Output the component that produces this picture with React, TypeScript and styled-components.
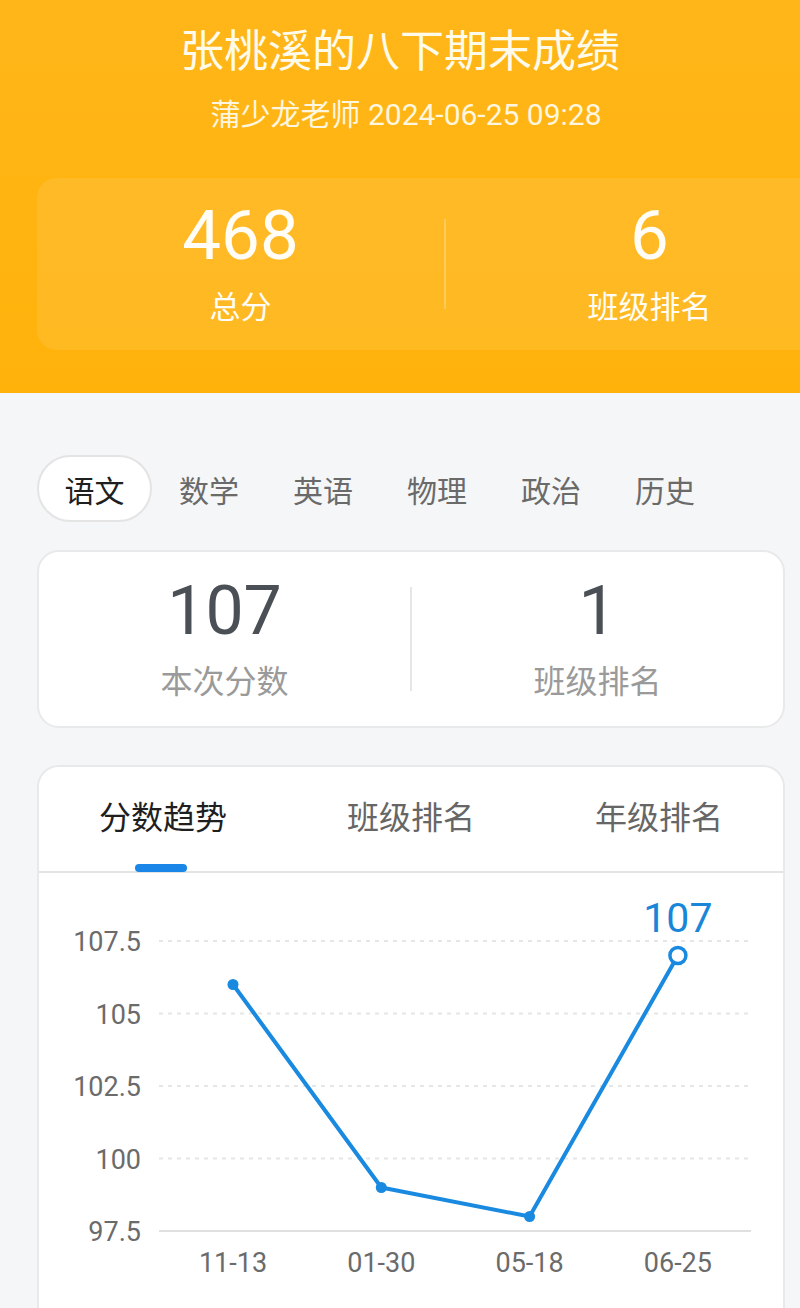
import styled, { createGlobalStyle } from 'styled-components'

const GlobalStyle = createGlobalStyle`
  html, body {
    margin: 0;
    padding: 0;
    background: #f5f6f7;
    font-family: Roboto, "Noto Sans CJK SC", sans-serif;
  }
  body {
    height: 1308px;
    overflow: hidden;
  }
`

const Page = styled.div`
  width: 800px;
  height: 1308px;
  overflow: hidden;
`

const Header = styled.header`
  background: linear-gradient(180deg, #ffb619 0%, #ffb20a 100%);
  height: 393px;
  padding-top: 23px;
  box-sizing: border-box;
  overflow: hidden;
`

const Title = styled.h1`
  margin: 0;
  text-align: center;
  color: #fffbea;
  font-size: 44px;
  font-weight: 400;
  line-height: 58px;
`

const Subtitle = styled.div`
  margin-top: 14px;
  padding-left: 12px;
  text-align: center;
  color: #fff6df;
  font-size: 30px;
  line-height: 40px;
`

const SummaryCard = styled.div`
  margin: 43px -53px 0 37px;
  height: 172px;
  border-radius: 20px;
  background: rgba(255, 255, 255, 0.09);
  display: flex;
  align-items: center;
`

const SummaryItem = styled.div`
  flex: 1;
  display: flex;
  flex-direction: column;
  align-items: center;
  color: #fffdf5;
`

const SummaryValue = styled.div`
  font-size: 69px;
  line-height: 72px;
`

const SummaryLabel = styled.div`
  margin-top: 16px;
  font-size: 31px;
  line-height: 40px;
`

const SummaryDivider = styled.div`
  width: 2px;
  height: 90px;
  background: rgba(255, 255, 255, 0.25);
`

const Body = styled.main`
  padding: 62px 15px 0 37px;
`

const SubjectTabs = styled.nav`
  display: flex;
  align-items: center;
`

const SubjectTab = styled.div<{ $active?: boolean }>`
  width: ${p => (p.$active ? '115px' : '114px')};
  height: 67px;
  box-sizing: border-box;
  display: flex;
  align-items: center;
  justify-content: center;
  border-radius: 34px;
  font-size: 30px;
  color: ${p => (p.$active ? '#1f1f1f' : '#6a6a6a')};
  background: ${p => (p.$active ? '#fff' : 'transparent')};
  border: ${p => (p.$active ? '2px solid #e4e4e4' : 'none')};
`

const Card = styled.section`
  background: #fff;
  border: 2px solid #e8e9ea;
  border-radius: 22px;
  box-sizing: border-box;
`

const ScoreCard = styled(Card)`
  margin-top: 28px;
  height: 178px;
  display: flex;
  align-items: center;
`

const ScoreItem = styled.div`
  flex: 1;
  display: flex;
  flex-direction: column;
  align-items: center;
`

const ScoreValue = styled.div`
  font-size: 68px;
  line-height: 72px;
  color: #4b5056;
`

const ScoreLabel = styled.div`
  margin-top: 14px;
  font-size: 32px;
  line-height: 42px;
  color: #9a9a9a;
`

const ScoreDivider = styled.div`
  width: 2px;
  height: 104px;
  background: #e6e6e6;
`

const ChartCard = styled(Card)`
  margin-top: 37px;
  height: 600px;
  overflow: hidden;
`

const ChartTabs = styled.div`
  display: flex;
  height: 106px;
  border-bottom: 2px solid #e3e4e6;
  box-sizing: border-box;
`

const ChartTab = styled.div<{ $active?: boolean }>`
  flex: 1;
  position: relative;
  display: flex;
  justify-content: center;
  padding-top: 31px;
  font-size: 32px;
  line-height: 40px;
  color: ${p => (p.$active ? '#1f1f1f' : '#666')};

  &::after {
    content: '';
    display: ${p => (p.$active ? 'block' : 'none')};
    position: absolute;
    bottom: -1px;
    left: 50%;
    width: 52px;
    margin-left: -28px;
    height: 8px;
    border-radius: 4px;
    background: #1a86e8;
  }
`

const subjects = ['语文', '数学', '英语', '物理', '政治', '历史']

const yTicks = [107.5, 105, 102.5, 100, 97.5]
const points = [
  { label: '11-13', value: 106 },
  { label: '01-30', value: 99 },
  { label: '05-18', value: 98 },
  { label: '06-25', value: 107 },
]

const xOf = (i: number) => 194 + i * 148.3
const yOf = (v: number) => 68 + ((107.5 - v) / 2.5) * 72.5

const TrendChart = () => {
  const last = points.length - 1
  return (
    <svg width="746" height="440" viewBox="0 0 746 440">
      {yTicks.map(t => (
        <g key={t}>
          <text
            x="102"
            y={yOf(t) + 10}
            textAnchor="end"
            fontSize="27"
            fill="#6b6b6b"
            fontFamily="Roboto, sans-serif"
          >
            {t}
          </text>
          <line
            x1="120"
            x2="712"
            y1={yOf(t)}
            y2={yOf(t)}
            stroke={t === 97.5 ? '#e0e0e0' : '#e6e6e6'}
            strokeWidth="2"
            strokeDasharray={t === 97.5 ? undefined : '4 5'}
          />
        </g>
      ))}
      <polyline
        points={points.map((p, i) => `${xOf(i)},${yOf(p.value)}`).join(' ')}
        fill="none"
        stroke="#1a8ae0"
        strokeWidth="4"
        strokeLinejoin="round"
      />
      {points.map((p, i) =>
        i === last ? (
          <circle key={p.label} cx={xOf(i)} cy={yOf(p.value)} r="8" fill="#fff" stroke="#1a8ae0" strokeWidth="3.5" />
        ) : (
          <circle key={p.label} cx={xOf(i)} cy={yOf(p.value)} r="5.5" fill="#1a8ae0" />
        )
      )}
      <text
        x={xOf(last)}
        y={yOf(points[last].value) - 24}
        textAnchor="middle"
        fontSize="41"
        fill="#1a86d8"
        fontFamily="Roboto, sans-serif"
      >
        {points[last].value}
      </text>
      {points.map((p, i) => (
        <text
          key={p.label}
          x={xOf(i)}
          y="399"
          textAnchor="middle"
          fontSize="27"
          fill="#6b6b6b"
          fontFamily="Roboto, sans-serif"
        >
          {p.label}
        </text>
      ))}
    </svg>
  )
}

const App = () => (
  <Page>
    <GlobalStyle />
    <Header>
      <Title>张桃溪的八下期末成绩</Title>
      <Subtitle>蒲少龙老师 2024-06-25 09:28</Subtitle>
      <SummaryCard>
        <SummaryItem>
          <SummaryValue>468</SummaryValue>
          <SummaryLabel>总分</SummaryLabel>
        </SummaryItem>
        <SummaryDivider />
        <SummaryItem>
          <SummaryValue>6</SummaryValue>
          <SummaryLabel>班级排名</SummaryLabel>
        </SummaryItem>
      </SummaryCard>
    </Header>
    <Body>
      <SubjectTabs>
        {subjects.map((s, i) => (
          <SubjectTab key={s} $active={i === 0}>
            {s}
          </SubjectTab>
        ))}
      </SubjectTabs>
      <ScoreCard>
        <ScoreItem>
          <ScoreValue>107</ScoreValue>
          <ScoreLabel>本次分数</ScoreLabel>
        </ScoreItem>
        <ScoreDivider />
        <ScoreItem>
          <ScoreValue>1</ScoreValue>
          <ScoreLabel>班级排名</ScoreLabel>
        </ScoreItem>
      </ScoreCard>
      <ChartCard>
        <ChartTabs>
          <ChartTab $active>分数趋势</ChartTab>
          <ChartTab>班级排名</ChartTab>
          <ChartTab>年级排名</ChartTab>
        </ChartTabs>
        <TrendChart />
      </ChartCard>
    </Body>
  </Page>
)

export default App
